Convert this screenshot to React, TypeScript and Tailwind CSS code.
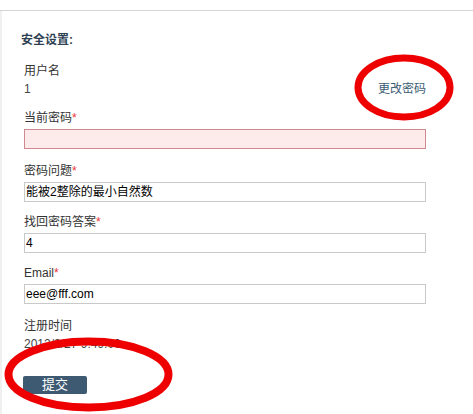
import React from 'react';

const font = { fontFamily: '"Liberation Sans", "Noto Sans CJK SC", sans-serif' };

function Label({ text, required, className = '' }: { text: string; required?: boolean; className?: string }) {
  return (
    <div className={`h-[16px] leading-[16px] text-[12px] text-[#333] ${className}`}>
      {text}
      {required && <span className="text-[#e33]">*</span>}
    </div>
  );
}

function Field({ value, error }: { value?: string; error?: boolean }) {
  return (
    <div
      className={`mt-[3px] h-[20px] w-[402px] border px-[1px] leading-[18px] text-[12px] text-black ${
        error ? 'border-[#cf8a90] bg-[#fdeaea]' : 'border-[#c9c9c9] bg-white'
      }`}
    >
      {value}
    </div>
  );
}

export default function App() {
  return (
    <div className="relative h-[414px] w-[473px] overflow-hidden bg-white" style={font}>
      {/* top rule */}
      <div className="h-[11px] border-b border-[#d4d4d4]" />

      <div className="h-[403px] border-l-2 border-[#f0f0f0] pl-[19px] pt-[21px]">
        <div className="h-[16px] leading-[16px] text-[12px] font-bold text-[#2f4254]">安全设置:</div>

        <div className="pl-[3px]">
          {/* username */}
          <div className="mt-[14px] flex w-[402px] items-end justify-between">
            <div className="text-[12px] leading-[18px] text-[#333]">
              <div>用户名</div>
              <div className="text-[#444]">1</div>
            </div>
            <a className="mb-[1px] text-[12px] leading-[16px] text-[#3d5d74]">更改密码</a>
          </div>

          <Label text="当前密码" required className="mt-[12px]" />
          <Field error />

          <Label text="密码问题" required className="mt-[14px]" />
          <Field value="能被2整除的最小自然数" />

          <Label text="找回密码答案" required className="mt-[12px]" />
          <Field value="4" />

          <Label text="Email" required className="mt-[12px]" />
          <Field value="eee@fff.com" />

          <div className="mt-[13px] text-[12px] leading-[18px] text-[#333]">
            <div>注册时间</div>
            <div className="text-[#444]">2012/2/27 9:49:00</div>
          </div>

          <button className="mt-[23px] ml-[-1px] h-[18px] w-[64px] rounded-[2px] bg-[#3d5a72] text-[13px] leading-[18px] text-white">
            提交
          </button>
        </div>
      </div>

      {/* red annotation rings */}
      <svg className="pointer-events-none absolute left-0 top-0" width="473" height="414">
        <ellipse cx="404" cy="87.5" rx="46" ry="29.5" fill="none" stroke="#ee0000" strokeWidth="7" />
        <ellipse cx="88.5" cy="374.5" rx="80" ry="33" fill="none" stroke="#ee0000" strokeWidth="8" />
      </svg>
    </div>
  );
}
